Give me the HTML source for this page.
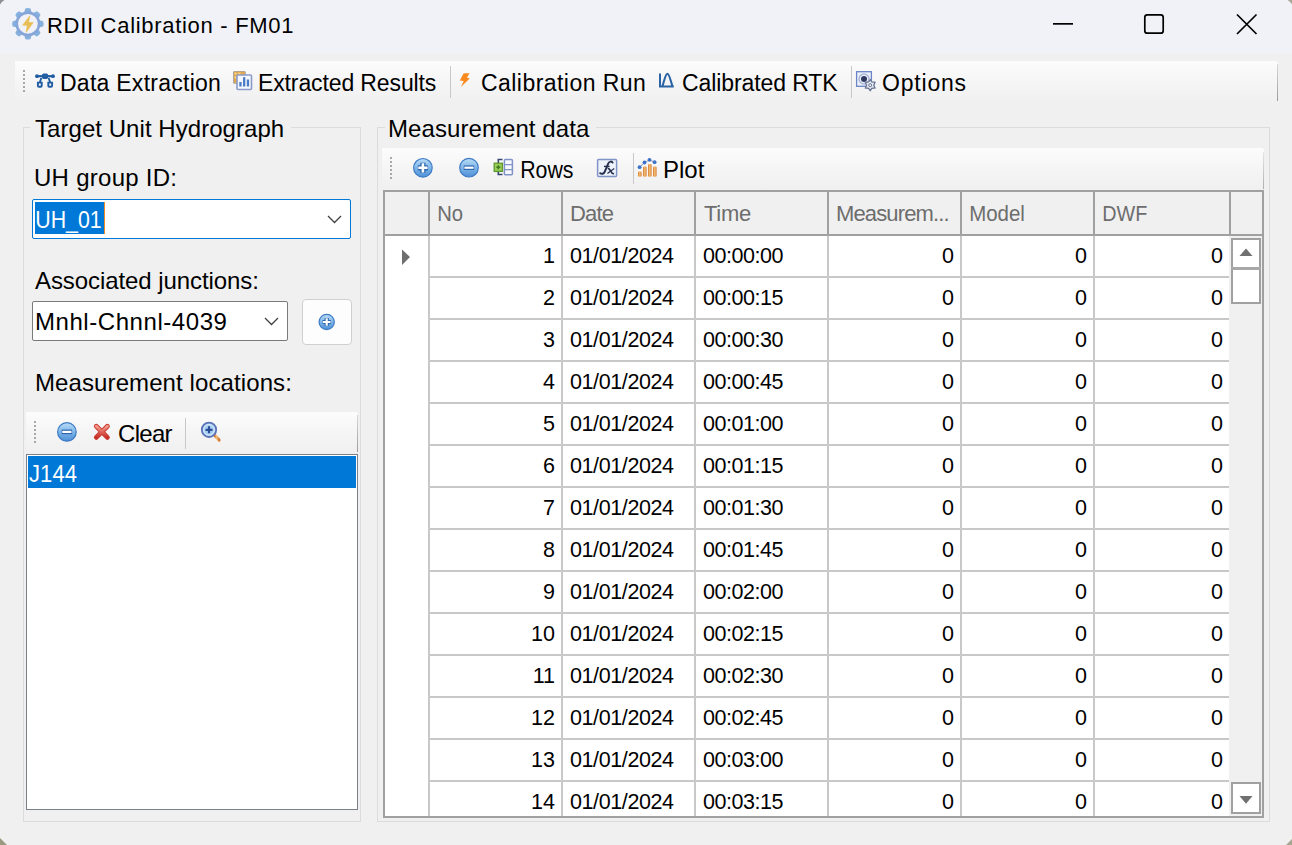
<!DOCTYPE html>
<html><head><meta charset="utf-8"><title>RDII Calibration - FM01</title>
<style>
html,body{margin:0;padding:0;}
body{width:1292px;height:845px;position:relative;overflow:hidden;background:#F0F0F0;font-family:'Liberation Sans', sans-serif;}
body>div{position:absolute;}
.t{white-space:pre;line-height:normal;}
</style></head><body>
<div style="left:0px;top:0px;width:1292px;height:53px;background:#F0F2F7"></div><div style="left:0px;top:53px;width:1292px;height:792px;background:#F0F0F0"></div><div class="t" style="left:47px;top:13px;font-size:22px;letter-spacing:0.7px;color:#000;">RDII Calibration - FM01</div><div style="left:15px;top:61px;width:1263px;height:42px;background:linear-gradient(#FCFCFC,#F6F6F6 45%,#F0F0F0);border-top-right-radius:3px"></div><div style="left:1277px;top:64px;width:1px;height:37px;background:linear-gradient(#DADADA,#9A9A9A)"></div><div class="t" style="left:60px;top:70px;font-size:23px;letter-spacing:0.26px;color:#000;">Data Extraction</div><div class="t" style="left:258px;top:70px;font-size:23px;letter-spacing:-0.12px;color:#000;">Extracted Results</div><div class="t" style="left:481px;top:70px;font-size:23px;letter-spacing:0.45px;color:#000;">Calibration Run</div><div class="t" style="left:682px;top:70px;font-size:23px;letter-spacing:-0.1px;color:#000;">Calibrated RTK</div><div class="t" style="left:882px;top:70px;font-size:23px;letter-spacing:0.8px;color:#000;">Options</div><div style="left:450px;top:66px;width:1px;height:32px;background:#C8C8C8"></div><div style="left:851px;top:66px;width:1px;height:32px;background:#C8C8C8"></div><div style="left:23px;top:127px;width:7px;height:1px;background:#DCDCDC"></div><div style="left:291px;top:127px;width:70px;height:1px;background:#DCDCDC"></div><div style="left:23px;top:127px;width:1px;height:695px;background:#DCDCDC"></div><div style="left:360px;top:127px;width:1px;height:695px;background:#DCDCDC"></div><div style="left:23px;top:821px;width:338px;height:1px;background:#DCDCDC"></div><div class="t" style="left:35px;top:115px;font-size:24px;letter-spacing:0.05px;color:#000;">Target Unit Hydrograph</div><div class="t" style="left:34px;top:164px;font-size:24px;letter-spacing:0.27px;color:#000;">UH group ID:</div><div style="left:32px;top:199px;width:319px;height:40px;box-sizing:border-box;border:1px solid #0078D7;border-radius:2px;background:#fff"></div><div style="left:35px;top:202px;width:70px;height:32px;background:#0078D7"></div><div style="left:104px;top:202px;width:1px;height:32px;background:#F08A24"></div><div class="t" style="left:35px;top:206px;font-size:24px;letter-spacing:0px;color:#fff;transform:scaleX(0.89);transform-origin:2px 0;">UH_01</div><div class="t" style="left:35px;top:267px;font-size:24px;letter-spacing:-0.08px;color:#000;">Associated junctions:</div><div style="left:32px;top:301px;width:256px;height:40px;box-sizing:border-box;border:1px solid #7A7A7A;border-radius:2px;background:#fff"></div><div class="t" style="left:35px;top:308px;font-size:24px;letter-spacing:0.56px;color:#000;">Mnhl-Chnnl-4039</div><div style="left:302px;top:299px;width:50px;height:46px;box-sizing:border-box;border:1px solid #D0D0D0;border-radius:4px;background:#FDFDFD"></div><div class="t" style="left:35px;top:369px;font-size:24px;letter-spacing:0.1px;color:#000;">Measurement locations:</div><div style="left:26px;top:412px;width:332px;height:41px;background:linear-gradient(#FCFCFC,#F5F5F5 50%,#F0F0F0);border-top-right-radius:3px"></div><div style="left:357px;top:415px;width:1px;height:37px;background:linear-gradient(#DADADA,#9A9A9A)"></div><div style="left:185px;top:418px;width:1px;height:31px;background:#C8C8C8"></div><div class="t" style="left:118px;top:420px;font-size:24px;letter-spacing:-0.7px;color:#000;">Clear</div><div style="left:26px;top:454px;width:332px;height:356px;box-sizing:border-box;border:1px solid #7A7F88;background:#fff"></div><div style="left:28px;top:456px;width:328px;height:32px;background:#0078D7"></div><div class="t" style="left:29px;top:460px;font-size:24px;letter-spacing:0px;color:#fff;transform:scaleX(0.92);transform-origin:1px 0;">J144</div><div style="left:377px;top:127px;width:8px;height:1px;background:#DCDCDC"></div><div style="left:596px;top:127px;width:674px;height:1px;background:#DCDCDC"></div><div style="left:377px;top:127px;width:1px;height:695px;background:#DCDCDC"></div><div style="left:1269px;top:127px;width:1px;height:695px;background:#DCDCDC"></div><div style="left:377px;top:821px;width:893px;height:1px;background:#DCDCDC"></div><div class="t" style="left:388px;top:115px;font-size:24px;letter-spacing:0.08px;color:#000;">Measurement data</div><div style="left:382px;top:148px;width:882px;height:42px;background:linear-gradient(#FCFCFC,#F5F5F5 50%,#F0F0F0);border-top-right-radius:3px"></div><div style="left:1263px;top:152px;width:1px;height:37px;background:linear-gradient(#E4E4E4,#B0B0B0)"></div><div style="left:633px;top:153px;width:1px;height:31px;background:#C8C8C8"></div><div class="t" style="left:520px;top:156px;font-size:24px;letter-spacing:0px;color:#000;transform:scaleX(0.888);transform-origin:2px 0;">Rows</div><div class="t" style="left:663px;top:156px;font-size:24px;letter-spacing:0px;color:#000;">Plot</div><div style="left:383px;top:190px;width:881px;height:628px;box-sizing:border-box;border:2px solid #A0A0A0;background:#F0F0F0"></div><div style="left:385px;top:192px;width:877px;height:42px;background:#F0F0F0"></div><div style="left:385px;top:236px;width:844px;height:580px;background:#fff"></div><div style="left:385px;top:234px;width:877px;height:2px;background:#A0A0A0"></div><div style="left:428px;top:192px;width:2px;height:42px;background:#A0A0A0"></div><div style="left:561px;top:192px;width:2px;height:42px;background:#A0A0A0"></div><div style="left:694px;top:192px;width:2px;height:42px;background:#A0A0A0"></div><div style="left:827px;top:192px;width:2px;height:42px;background:#A0A0A0"></div><div style="left:960px;top:192px;width:2px;height:42px;background:#A0A0A0"></div><div style="left:1093px;top:192px;width:2px;height:42px;background:#A0A0A0"></div><div style="left:1229px;top:192px;width:2px;height:42px;background:#A0A0A0"></div><div style="left:428px;top:236px;width:2px;height:580px;background:#C8C8C8"></div><div style="left:561px;top:236px;width:2px;height:580px;background:#C8C8C8"></div><div style="left:694px;top:236px;width:2px;height:580px;background:#C8C8C8"></div><div style="left:827px;top:236px;width:2px;height:580px;background:#C8C8C8"></div><div style="left:960px;top:236px;width:2px;height:580px;background:#C8C8C8"></div><div style="left:1093px;top:236px;width:2px;height:580px;background:#C8C8C8"></div><div style="left:430px;top:276px;width:799px;height:2px;background:#C8C8C8"></div><div style="left:430px;top:318px;width:799px;height:2px;background:#C8C8C8"></div><div style="left:430px;top:360px;width:799px;height:2px;background:#C8C8C8"></div><div style="left:430px;top:402px;width:799px;height:2px;background:#C8C8C8"></div><div style="left:430px;top:444px;width:799px;height:2px;background:#C8C8C8"></div><div style="left:430px;top:486px;width:799px;height:2px;background:#C8C8C8"></div><div style="left:430px;top:528px;width:799px;height:2px;background:#C8C8C8"></div><div style="left:430px;top:570px;width:799px;height:2px;background:#C8C8C8"></div><div style="left:430px;top:612px;width:799px;height:2px;background:#C8C8C8"></div><div style="left:430px;top:654px;width:799px;height:2px;background:#C8C8C8"></div><div style="left:430px;top:696px;width:799px;height:2px;background:#C8C8C8"></div><div style="left:430px;top:738px;width:799px;height:2px;background:#C8C8C8"></div><div style="left:430px;top:780px;width:799px;height:2px;background:#C8C8C8"></div><div class="t" style="left:437px;top:201px;font-size:22px;letter-spacing:0px;color:#6D6D6D;transform:scaleX(0.92);transform-origin:2px 0;">No</div><div class="t" style="left:570px;top:201px;font-size:22px;letter-spacing:-0.8px;color:#6D6D6D;">Date</div><div class="t" style="left:704px;top:201px;font-size:22px;letter-spacing:-0.3px;color:#6D6D6D;">Time</div><div class="t" style="left:836px;top:201px;font-size:22px;letter-spacing:-0.86px;color:#6D6D6D;">Measurem...</div><div class="t" style="left:969px;top:201px;font-size:22px;letter-spacing:0px;color:#6D6D6D;transform:scaleX(0.93);transform-origin:2px 0;">Model</div><div class="t" style="left:1102px;top:201px;font-size:22px;letter-spacing:0px;color:#6D6D6D;transform:scaleX(0.9);transform-origin:2px 0;">DWF</div><div class="t" style="right:737px;top:244px;font-size:21.5px;letter-spacing:0px;color:#000;">1</div><div class="t" style="left:570px;top:244px;font-size:21.5px;letter-spacing:-0.4px;color:#000;">01/01/2024</div><div class="t" style="left:703px;top:244px;font-size:21.5px;letter-spacing:-0.46px;color:#000;">00:00:00</div><div class="t" style="right:338px;top:244px;font-size:21.5px;letter-spacing:0px;color:#000;">0</div><div class="t" style="right:205px;top:244px;font-size:21.5px;letter-spacing:0px;color:#000;">0</div><div class="t" style="right:69px;top:244px;font-size:21.5px;letter-spacing:0px;color:#000;">0</div><div class="t" style="right:737px;top:286px;font-size:21.5px;letter-spacing:0px;color:#000;">2</div><div class="t" style="left:570px;top:286px;font-size:21.5px;letter-spacing:-0.4px;color:#000;">01/01/2024</div><div class="t" style="left:703px;top:286px;font-size:21.5px;letter-spacing:-0.46px;color:#000;">00:00:15</div><div class="t" style="right:338px;top:286px;font-size:21.5px;letter-spacing:0px;color:#000;">0</div><div class="t" style="right:205px;top:286px;font-size:21.5px;letter-spacing:0px;color:#000;">0</div><div class="t" style="right:69px;top:286px;font-size:21.5px;letter-spacing:0px;color:#000;">0</div><div class="t" style="right:737px;top:328px;font-size:21.5px;letter-spacing:0px;color:#000;">3</div><div class="t" style="left:570px;top:328px;font-size:21.5px;letter-spacing:-0.4px;color:#000;">01/01/2024</div><div class="t" style="left:703px;top:328px;font-size:21.5px;letter-spacing:-0.46px;color:#000;">00:00:30</div><div class="t" style="right:338px;top:328px;font-size:21.5px;letter-spacing:0px;color:#000;">0</div><div class="t" style="right:205px;top:328px;font-size:21.5px;letter-spacing:0px;color:#000;">0</div><div class="t" style="right:69px;top:328px;font-size:21.5px;letter-spacing:0px;color:#000;">0</div><div class="t" style="right:737px;top:370px;font-size:21.5px;letter-spacing:0px;color:#000;">4</div><div class="t" style="left:570px;top:370px;font-size:21.5px;letter-spacing:-0.4px;color:#000;">01/01/2024</div><div class="t" style="left:703px;top:370px;font-size:21.5px;letter-spacing:-0.46px;color:#000;">00:00:45</div><div class="t" style="right:338px;top:370px;font-size:21.5px;letter-spacing:0px;color:#000;">0</div><div class="t" style="right:205px;top:370px;font-size:21.5px;letter-spacing:0px;color:#000;">0</div><div class="t" style="right:69px;top:370px;font-size:21.5px;letter-spacing:0px;color:#000;">0</div><div class="t" style="right:737px;top:412px;font-size:21.5px;letter-spacing:0px;color:#000;">5</div><div class="t" style="left:570px;top:412px;font-size:21.5px;letter-spacing:-0.4px;color:#000;">01/01/2024</div><div class="t" style="left:703px;top:412px;font-size:21.5px;letter-spacing:-0.46px;color:#000;">00:01:00</div><div class="t" style="right:338px;top:412px;font-size:21.5px;letter-spacing:0px;color:#000;">0</div><div class="t" style="right:205px;top:412px;font-size:21.5px;letter-spacing:0px;color:#000;">0</div><div class="t" style="right:69px;top:412px;font-size:21.5px;letter-spacing:0px;color:#000;">0</div><div class="t" style="right:737px;top:454px;font-size:21.5px;letter-spacing:0px;color:#000;">6</div><div class="t" style="left:570px;top:454px;font-size:21.5px;letter-spacing:-0.4px;color:#000;">01/01/2024</div><div class="t" style="left:703px;top:454px;font-size:21.5px;letter-spacing:-0.46px;color:#000;">00:01:15</div><div class="t" style="right:338px;top:454px;font-size:21.5px;letter-spacing:0px;color:#000;">0</div><div class="t" style="right:205px;top:454px;font-size:21.5px;letter-spacing:0px;color:#000;">0</div><div class="t" style="right:69px;top:454px;font-size:21.5px;letter-spacing:0px;color:#000;">0</div><div class="t" style="right:737px;top:496px;font-size:21.5px;letter-spacing:0px;color:#000;">7</div><div class="t" style="left:570px;top:496px;font-size:21.5px;letter-spacing:-0.4px;color:#000;">01/01/2024</div><div class="t" style="left:703px;top:496px;font-size:21.5px;letter-spacing:-0.46px;color:#000;">00:01:30</div><div class="t" style="right:338px;top:496px;font-size:21.5px;letter-spacing:0px;color:#000;">0</div><div class="t" style="right:205px;top:496px;font-size:21.5px;letter-spacing:0px;color:#000;">0</div><div class="t" style="right:69px;top:496px;font-size:21.5px;letter-spacing:0px;color:#000;">0</div><div class="t" style="right:737px;top:538px;font-size:21.5px;letter-spacing:0px;color:#000;">8</div><div class="t" style="left:570px;top:538px;font-size:21.5px;letter-spacing:-0.4px;color:#000;">01/01/2024</div><div class="t" style="left:703px;top:538px;font-size:21.5px;letter-spacing:-0.46px;color:#000;">00:01:45</div><div class="t" style="right:338px;top:538px;font-size:21.5px;letter-spacing:0px;color:#000;">0</div><div class="t" style="right:205px;top:538px;font-size:21.5px;letter-spacing:0px;color:#000;">0</div><div class="t" style="right:69px;top:538px;font-size:21.5px;letter-spacing:0px;color:#000;">0</div><div class="t" style="right:737px;top:580px;font-size:21.5px;letter-spacing:0px;color:#000;">9</div><div class="t" style="left:570px;top:580px;font-size:21.5px;letter-spacing:-0.4px;color:#000;">01/01/2024</div><div class="t" style="left:703px;top:580px;font-size:21.5px;letter-spacing:-0.46px;color:#000;">00:02:00</div><div class="t" style="right:338px;top:580px;font-size:21.5px;letter-spacing:0px;color:#000;">0</div><div class="t" style="right:205px;top:580px;font-size:21.5px;letter-spacing:0px;color:#000;">0</div><div class="t" style="right:69px;top:580px;font-size:21.5px;letter-spacing:0px;color:#000;">0</div><div class="t" style="right:737px;top:622px;font-size:21.5px;letter-spacing:0px;color:#000;">10</div><div class="t" style="left:570px;top:622px;font-size:21.5px;letter-spacing:-0.4px;color:#000;">01/01/2024</div><div class="t" style="left:703px;top:622px;font-size:21.5px;letter-spacing:-0.46px;color:#000;">00:02:15</div><div class="t" style="right:338px;top:622px;font-size:21.5px;letter-spacing:0px;color:#000;">0</div><div class="t" style="right:205px;top:622px;font-size:21.5px;letter-spacing:0px;color:#000;">0</div><div class="t" style="right:69px;top:622px;font-size:21.5px;letter-spacing:0px;color:#000;">0</div><div class="t" style="right:737px;top:664px;font-size:21.5px;letter-spacing:0px;color:#000;">11</div><div class="t" style="left:570px;top:664px;font-size:21.5px;letter-spacing:-0.4px;color:#000;">01/01/2024</div><div class="t" style="left:703px;top:664px;font-size:21.5px;letter-spacing:-0.46px;color:#000;">00:02:30</div><div class="t" style="right:338px;top:664px;font-size:21.5px;letter-spacing:0px;color:#000;">0</div><div class="t" style="right:205px;top:664px;font-size:21.5px;letter-spacing:0px;color:#000;">0</div><div class="t" style="right:69px;top:664px;font-size:21.5px;letter-spacing:0px;color:#000;">0</div><div class="t" style="right:737px;top:706px;font-size:21.5px;letter-spacing:0px;color:#000;">12</div><div class="t" style="left:570px;top:706px;font-size:21.5px;letter-spacing:-0.4px;color:#000;">01/01/2024</div><div class="t" style="left:703px;top:706px;font-size:21.5px;letter-spacing:-0.46px;color:#000;">00:02:45</div><div class="t" style="right:338px;top:706px;font-size:21.5px;letter-spacing:0px;color:#000;">0</div><div class="t" style="right:205px;top:706px;font-size:21.5px;letter-spacing:0px;color:#000;">0</div><div class="t" style="right:69px;top:706px;font-size:21.5px;letter-spacing:0px;color:#000;">0</div><div class="t" style="right:737px;top:748px;font-size:21.5px;letter-spacing:0px;color:#000;">13</div><div class="t" style="left:570px;top:748px;font-size:21.5px;letter-spacing:-0.4px;color:#000;">01/01/2024</div><div class="t" style="left:703px;top:748px;font-size:21.5px;letter-spacing:-0.46px;color:#000;">00:03:00</div><div class="t" style="right:338px;top:748px;font-size:21.5px;letter-spacing:0px;color:#000;">0</div><div class="t" style="right:205px;top:748px;font-size:21.5px;letter-spacing:0px;color:#000;">0</div><div class="t" style="right:69px;top:748px;font-size:21.5px;letter-spacing:0px;color:#000;">0</div><div class="t" style="right:737px;top:790px;font-size:21.5px;letter-spacing:0px;color:#000;">14</div><div class="t" style="left:570px;top:790px;font-size:21.5px;letter-spacing:-0.4px;color:#000;">01/01/2024</div><div class="t" style="left:703px;top:790px;font-size:21.5px;letter-spacing:-0.46px;color:#000;">00:03:15</div><div class="t" style="right:338px;top:790px;font-size:21.5px;letter-spacing:0px;color:#000;">0</div><div class="t" style="right:205px;top:790px;font-size:21.5px;letter-spacing:0px;color:#000;">0</div><div class="t" style="right:69px;top:790px;font-size:21.5px;letter-spacing:0px;color:#000;">0</div><div style="left:1231px;top:238px;width:30px;height:31px;box-sizing:border-box;border:2px solid #A0A0A0;background:#fff"></div><div style="left:1231px;top:267px;width:30px;height:37px;box-sizing:border-box;border:2px solid #A0A0A0;background:#fff"></div><div style="left:1231px;top:267px;width:30px;height:3px;background:#A8A8A8"></div><div style="left:1231px;top:782px;width:30px;height:32px;box-sizing:border-box;border:2px solid #A0A0A0;background:#fff"></div>
<svg width="1292" height="845" viewBox="0 0 1292 845" style="position:absolute;left:0;top:0">
<defs>
 <linearGradient id="gb" x1="0" y1="0" x2="0" y2="1"><stop offset="0" stop-color="#B9DDF6"/><stop offset="0.5" stop-color="#7FB6E8"/><stop offset="1" stop-color="#4E8FD6"/></linearGradient>
 <linearGradient id="gr" x1="0" y1="0" x2="0" y2="1"><stop offset="0" stop-color="#F59A8A"/><stop offset="1" stop-color="#C8302A"/></linearGradient>
 <linearGradient id="go" x1="0" y1="0" x2="1" y2="0"><stop offset="0" stop-color="#D5782C"/><stop offset="0.5" stop-color="#F5C27A"/><stop offset="1" stop-color="#D5782C"/></linearGradient>
</defs>
<!-- window corner artifacts -->
<path d="M0 0 L4.5 0 Q1.5 1.5 0 4.5 Z" fill="#8C9196"/>
<path d="M1287.5 0 L1292 0 L1292 4.5 Q1290.5 1.5 1287.5 0 Z" fill="#A8A898"/>
<path d="M0 845 L0 838 L7 845 Z" fill="#9A9A80"/>
<path d="M1292 845 L1292 839 L1286 845 Z" fill="#A5A592"/>
<!-- app icon gear -->
<g transform="translate(27.9,23.8)">
 <g fill="#86B1DE">
  <path id="tooth" d="M-3.8 -11 L-2.6 -15.2 Q0 -16.4 2.6 -15.2 L3.8 -11 Z"/>
  <use href="#tooth" transform="rotate(45)"/><use href="#tooth" transform="rotate(90)"/><use href="#tooth" transform="rotate(135)"/>
  <use href="#tooth" transform="rotate(180)"/><use href="#tooth" transform="rotate(225)"/><use href="#tooth" transform="rotate(270)"/><use href="#tooth" transform="rotate(315)"/>
 </g>
 <circle r="11.2" fill="none" stroke="#86A5D8" stroke-width="2.6"/>
 <path d="M1.9 -8 L-5.3 1.4 L-0.6 1.4 L-1.7 8.4 L5.3 -1.2 L0.7 -1.2 Z" fill="#E8BE55" stroke="#E8BE55" stroke-width="0.6" stroke-linejoin="round"/>
</g>
<!-- title buttons -->
<rect x="1053" y="23" width="20" height="1.7" fill="#000"/>
<rect x="1144.8" y="14.8" width="18.4" height="18.4" rx="2.5" fill="none" stroke="#000" stroke-width="1.7"/>
<path d="M1237 14.5 L1256.5 34 M1256.5 14.5 L1237 34" stroke="#000" stroke-width="1.7"/>
<!-- toolbar grips -->
<g fill="#A8A8A8">
<rect x="23" y="70" width="2" height="2"/><rect x="23" y="74" width="2" height="2"/><rect x="23" y="78" width="2" height="2"/><rect x="23" y="82" width="2" height="2"/><rect x="23" y="86" width="2" height="2"/><rect x="23" y="90" width="2" height="2"/><rect x="34" y="421" width="2" height="2"/><rect x="34" y="425" width="2" height="2"/><rect x="34" y="429" width="2" height="2"/><rect x="34" y="433" width="2" height="2"/><rect x="34" y="437" width="2" height="2"/><rect x="34" y="441" width="2" height="2"/><rect x="390" y="157" width="2" height="2"/><rect x="390" y="161" width="2" height="2"/><rect x="390" y="165" width="2" height="2"/><rect x="390" y="169" width="2" height="2"/><rect x="390" y="173" width="2" height="2"/><rect x="390" y="177" width="2" height="2"/></g>
<!-- data extraction icon -->
<g stroke="#1F5CA2" fill="none" stroke-width="1.9">
 <path d="M36.5 76.2 H53.5" stroke-width="2.2"/>
 <rect x="42.9" y="74.4" width="4.3" height="3.6" rx="0.8"/>
 <path d="M41.3 78 L39.9 82.4 M48.7 78 L50.1 82.4"/>
 <path d="M37.9 82.6 H41.7 V85.8 Q41.7 86.8 40.7 86.8 H38.9 Q37.9 86.8 37.9 85.8 Z"/>
 <path d="M48.3 82.6 H52.1 V85.8 Q52.1 86.8 51.1 86.8 H49.3 Q48.3 86.8 48.3 85.8 Z"/>
</g>
<circle cx="37" cy="76.2" r="1.9" fill="#1F5CA2"/><circle cx="53" cy="76.2" r="1.9" fill="#1F5CA2"/>
<!-- extracted results icon -->
<rect x="233.6" y="71.6" width="11.6" height="11.6" rx="1" fill="#FBF3DC" stroke="#8FA0CC" stroke-width="1.2"/>
<path d="M233.6 71.6 H245.2 V75 H237 V83.2 H233.6 Z" fill="#E0A850"/>
<rect x="234.6" y="72.6" width="2" height="2" fill="#F6D98E"/><rect x="238.4" y="72.6" width="2" height="2" fill="#F6D98E"/>
<rect x="234.6" y="76.4" width="2" height="2" fill="#F6D98E"/>
<rect x="237" y="75" width="14.5" height="14.5" rx="1" fill="#F4F7FD" stroke="#8B9BCB" stroke-width="1.6"/>
<rect x="239.3" y="82" width="2.3" height="4.5" fill="#4A7CC8"/>
<rect x="243" y="77.2" width="2.3" height="9.3" fill="#4A7CC8"/>
<rect x="246.8" y="79.5" width="2.3" height="7" fill="#4A7CC8"/>
<!-- lightning -->
<path d="M463.7 73.3 L469.6 73.3 L466.9 77.4 L469.7 78.6 L460.9 86.9 L463.7 80.9 L459.8 80.6 Z" fill="#F7891F"/>
<!-- calibrated RTK -->
<path d="M660 73.5 V86.6 H673.8 M662.3 86.6 C664.5 80 665.5 73.8 667.4 73.8 C669.3 73.8 670.3 80 672.6 86.6" stroke="#2A64A6" stroke-width="2" fill="none"/>
<!-- options -->
<rect x="856.6" y="71.7" width="14.8" height="14.6" fill="#EEF2FB" stroke="#6B85C8" stroke-width="1.3"/>
<circle cx="864" cy="79" r="5" fill="none" stroke="#A9B7D8" stroke-width="1.5"/>
<circle cx="864" cy="79" r="3" fill="#2F3A60"/>
<g transform="translate(870.2,85.2)">
 <path d="M0 -5.5 L1.6 -3.2 L4.8 -2.8 L3.6 0 L4.8 2.8 L1.6 3.2 L0 5.5 L-1.6 3.2 L-4.8 2.8 L-3.6 0 L-4.8 -2.8 L-1.6 -3.2 Z" fill="#E8ECF4" stroke="#6A7594" stroke-width="1.3"/>
 <circle r="1.5" fill="none" stroke="#6A7594" stroke-width="1"/>
</g>
<!-- combo chevrons -->
<path d="M328 216 L334.5 222.5 L341 216" stroke="#404040" stroke-width="1.3" fill="none"/>
<path d="M265 318 L271.5 324.5 L278 318" stroke="#404040" stroke-width="1.3" fill="none"/>
<circle cx="326.7" cy="322" r="7.6" fill="url(#gb)" stroke="#3F7BC6" stroke-width="1.2"/>
<path d="M322.61397849462367 322 H330.7860215053763 M326.7 317.9139784946237 V326.0860215053763" stroke="#2E66B0" stroke-width="4.2494623655913975"/>
<path d="M322.94086021505376 322 H330.4591397849462 M326.7 318.2408602150538 V325.7591397849462" stroke="#fff" stroke-width="2.1247311827956987"/><circle cx="66.9" cy="431.9" r="9.3" fill="url(#gb)" stroke="#3F7BC6" stroke-width="1.2"/>
<path d="M61.7 431.9 H72.10000000000001" stroke="#2E66B0" stroke-width="4.6"/>
<path d="M62.300000000000004 431.9 H71.5" stroke="#fff" stroke-width="2.2"/><circle cx="422.9" cy="167.8" r="9.3" fill="url(#gb)" stroke="#3F7BC6" stroke-width="1.2"/>
<path d="M417.9 167.8 H427.9 M422.9 162.8 V172.8" stroke="#2E66B0" stroke-width="5.2"/>
<path d="M418.29999999999995 167.8 H427.5 M422.9 163.20000000000002 V172.4" stroke="#fff" stroke-width="2.6"/><circle cx="469" cy="167.7" r="9.3" fill="url(#gb)" stroke="#3F7BC6" stroke-width="1.2"/>
<path d="M463.8 167.7 H474.2" stroke="#2E66B0" stroke-width="4.6"/>
<path d="M464.4 167.7 H473.6" stroke="#fff" stroke-width="2.2"/>
<!-- red X -->
<path d="M96.3 426.3 L107.4 437.4 M107.4 426.3 L96.3 437.4" stroke="#C8372E" stroke-width="4.8" stroke-linecap="round"/>
<path d="M96.3 426.3 L107.4 437.4 M107.4 426.3 L96.3 437.4" stroke="url(#gr)" stroke-width="3" stroke-linecap="round"/>
<!-- magnifier -->
<path d="M214.5 435 L219 440" stroke="url(#go)" stroke-width="3.2" stroke-linecap="round"/>
<circle cx="209" cy="429.8" r="7.2" fill="#A8D2F2" stroke="#5E72B8" stroke-width="1.8"/>
<circle cx="209" cy="429.8" r="5.3" fill="none" stroke="#DDE9F8" stroke-width="1"/>
<path d="M205.5 429.8 H212.5 M209 426.3 V433.3" stroke="#2D4C9A" stroke-width="2.2"/>
<!-- rows icon -->
<path d="M502.5 159.5 H498.3 V174.5 H502.5" stroke="#3A4670" stroke-width="1.6" fill="none"/>
<rect x="494.2" y="163.2" width="8.2" height="8.2" fill="#9BCF5A" stroke="#5D9A2C" stroke-width="1.3"/>
<path d="M496.3 167.3 H500.3 M498.3 165.3 V169.3" stroke="#3F7A1E" stroke-width="1.6"/>
<rect x="504.4" y="159.5" width="8" height="15.2" rx="1" fill="#F7F9FE" stroke="#8092C6" stroke-width="1.5"/>
<path d="M504.4 164.6 H512.4 M504.4 169.6 H512.4" stroke="#8092C6" stroke-width="1.3"/>
<!-- fx icon -->
<rect x="597.6" y="159.4" width="19" height="17" rx="1" fill="#EEF2FA" stroke="#8094C8" stroke-width="1.5"/>
<path d="M612.6 162.6 C612 161.2 609.4 161 608.3 163.4 L604.6 172 C603.8 173.9 601.6 174.3 600.2 173.2" stroke="#25304F" stroke-width="1.9" fill="none" stroke-linecap="round"/>
<path d="M604 166.4 H609.6" stroke="#25304F" stroke-width="1.4"/>
<path d="M607.6 168.4 C609 168 610 169.5 611 171.5 C611.8 173.2 612.8 174 614 173.4" stroke="#25304F" stroke-width="1.7" fill="none"/>
<path d="M614.2 168.6 L607.4 173.6" stroke="#25304F" stroke-width="1.2"/>
<!-- plot icon -->
<g fill="url(#go)">
 <rect x="638" y="171.5" width="3.6" height="5.2" rx="1.2"/>
 <rect x="643" y="166.5" width="3.6" height="10.2" rx="1.2"/>
 <rect x="648" y="164" width="3.6" height="12.7" rx="1.2"/>
 <rect x="653" y="166.5" width="3.6" height="10.2" rx="1.2"/>
</g>
<path d="M639.6 167.2 L644.5 162.5 L649.5 159.8 L654.6 162.2" stroke="#7A7FA8" stroke-width="0.8" fill="none"/>
<g fill="#3C73C8"><circle cx="639.6" cy="167.2" r="1.9"/><circle cx="644.5" cy="162.5" r="1.9"/><circle cx="649.5" cy="159.8" r="1.9"/><circle cx="654.6" cy="162.2" r="1.9"/></g>
<!-- row header arrow -->
<path d="M402 249.5 L410 257 L402 265 Z" fill="#6E6E6E"/>
<!-- scroll arrows -->
<path d="M1239.5 256 L1246 248.5 L1252.5 256 Z" fill="#707070"/>
<path d="M1239.5 796 L1246 803.8 L1252.5 796 Z" fill="#707070"/>
</svg>

</body></html>
